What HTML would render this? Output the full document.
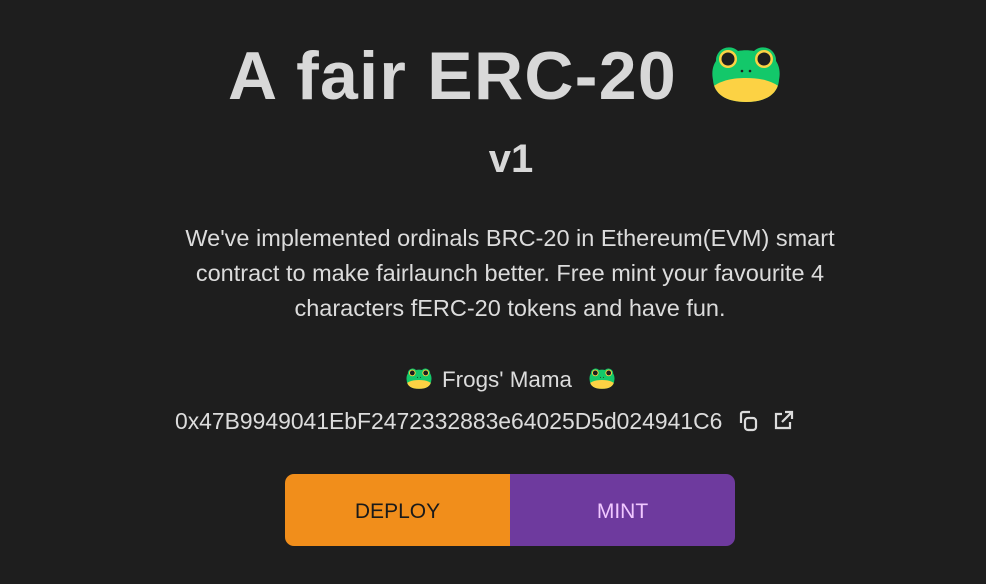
<!DOCTYPE html>
<html><head><style>
html,body{margin:0;padding:0;background:#1e1e1e;width:986px;height:584px;overflow:hidden;font-family:"Liberation Sans",sans-serif;}
.abs{position:absolute;white-space:nowrap;}
h1{position:absolute;left:228px;top:36px;margin:0;font-size:68px;font-weight:bold;color:#d8d8d8;line-height:80px;letter-spacing:1.3px;}
.v1{left:0;width:1022px;text-align:center;top:134px;font-size:40px;font-weight:bold;color:#d8d8d8;line-height:50px;}
.p{left:0;width:1020px;text-align:center;top:221px;font-size:23.5px;line-height:35px;color:#dcdcdc;}
.btn{position:absolute;top:474px;height:72px;width:225px;display:flex;align-items:center;justify-content:center;font-size:21px;padding-top:3px;box-sizing:border-box;}
</style></head><body>
<svg width="0" height="0" style="position:absolute">
<defs>
<symbol id="frog" viewBox="0 0 70 60">
<clipPath id="hc"><path d="M2 36 C0 26 3 20 5 17 A13 13 0 0 1 27 7 C32 6 38 6 43 7 A13 13 0 0 1 65 17 C67 20 70 26 68 36 C67 50 55 58 35 58 C15 58 3 50 2 36Z"/></clipPath>
<g clip-path="url(#hc)">
<rect width="70" height="60" fill="#13c86a"/>
<path d="M0 44 C10 36 22 34 35 34 C48 34 60 36 70 44 L70 60 L0 60Z" fill="#fcd244"/>
</g>
<circle cx="17" cy="15" r="9" fill="#fcd244"/><circle cx="17" cy="15" r="6.5" fill="#1e1e1e"/>
<circle cx="53" cy="15" r="9" fill="#fcd244"/><circle cx="53" cy="15" r="6.5" fill="#1e1e1e"/>
<circle cx="31" cy="27" r="1.3" fill="#1e1e1e"/><circle cx="39" cy="27" r="1.3" fill="#1e1e1e"/>
</symbol></defs></svg>
<h1>A fair ERC-20</h1>
<svg class="abs" style="left:711px;top:44px" width="70" height="60"><use href="#frog"/></svg>
<div class="abs v1">v1</div>
<div class="abs p">We've implemented ordinals BRC-20 in Ethereum(EVM) smart<br>contract to make fairlaunch better. Free mint your favourite 4<br>characters fERC-20 tokens and have fun.</div>
<svg class="abs" style="left:406px;top:367px" width="26" height="23"><use href="#frog"/></svg>
<div class="abs" style="left:442px;top:366px;font-size:22.4px;line-height:28px;color:#dcdcdc">Frogs' Mama</div>
<svg class="abs" style="left:589px;top:367px" width="26" height="23"><use href="#frog"/></svg>
<div class="abs" style="left:175px;top:407px;font-size:22.9px;line-height:28px;color:#dcdcdc">0x47B9949041EbF2472332883e64025D5d024941C6</div>
<svg class="abs" style="left:736px;top:409px" width="24" height="24" viewBox="0 0 24 24" fill="none" stroke="#dcdcdc" stroke-width="2.2"><path d="M5 14V5a2 2 0 0 1 2-2h7"/><rect x="9" y="9" width="11" height="12" rx="3"/></svg>
<svg class="abs" style="left:771px;top:409px" width="24" height="24" viewBox="0 0 24 24" fill="none" stroke="#dcdcdc" stroke-width="2.2"><path d="M11 5H5v14h14v-6"/><path d="M14 3h7v7M21 3l-10 10"/></svg>
<div class="btn" style="left:285px;background:#f18e1b;color:#1a1a1a;border-radius:9px 0 0 9px">DEPLOY</div>
<div class="btn" style="left:510px;background:#6e3a9e;color:#f0c8ff;border-radius:0 9px 9px 0">MINT</div>
</body></html>
